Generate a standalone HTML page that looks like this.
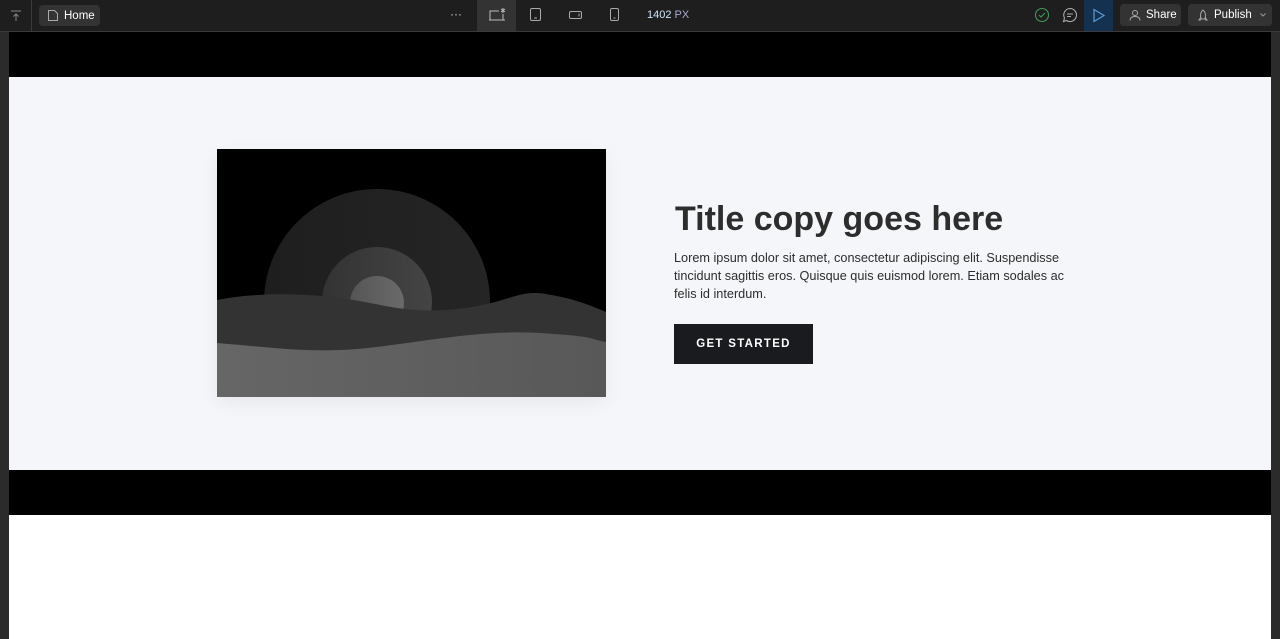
<!DOCTYPE html>
<html><head><style>
*{margin:0;padding:0;box-sizing:border-box}
body{width:1280px;height:639px;overflow:hidden;background:#2b2b2b;font-family:"Liberation Sans",sans-serif;position:relative}
.tb{position:absolute;left:0;top:0;width:1280px;height:32px;background:#1e1e1e;border-bottom:1px solid #3a3a3a}
.abs{position:absolute}
.btn{position:absolute;background:#333;border-radius:4px;color:#fff;font-size:11.5px;display:flex;align-items:center}
</style></head><body>
<div class="tb">
 <div class="abs" style="left:31px;top:0;width:1px;height:31px;background:#3a3a3a"></div>
 <svg class="abs" style="left:9px;top:9px" width="14" height="14" viewBox="0 0 14 14" fill="none" stroke="#888" stroke-width="1"><path d="M2 2h10M7 12V5M4.5 7.5L7 5l2.5 2.5"/></svg>
 <div class="btn" style="left:39px;top:5px;width:61px;height:21px;padding-left:8px"><svg width="12" height="13" viewBox="0 0 12 13" fill="none" stroke="#aaa"><path d="M1.5 1.5h6l3 3v7h-9z"/></svg><span style="margin-left:5px">Home</span></div>
 <div class="abs" style="left:450px;top:7px;color:#ccc;font-size:12px">···</div>
 <div class="abs" style="left:477px;top:0;width:39px;height:31px;background:#333"></div>
 <svg class="abs" style="left:486px;top:6px" width="22" height="16" viewBox="0 0 22 16" fill="none" stroke="#bbb" stroke-width="1"><path d="M3 14h16M4 14V5h9M17 8v6"/><path d="M17 2v5M15 3l4 3M19 3l-4 3" /></svg>
 <svg class="abs" style="left:529px;top:7px" width="13" height="16" viewBox="0 0 13 16" fill="none" stroke="#aaa"><rect x="1.5" y="1.5" width="10" height="12" rx="1.5"/><path d="M5 11h3"/></svg>
 <svg class="abs" style="left:568px;top:9px" width="16" height="12" viewBox="0 0 16 12" fill="none" stroke="#aaa"><rect x="1.5" y="2.5" width="12" height="7" rx="1.5"/><path d="M11 4.5v3"/></svg>
 <svg class="abs" style="left:609px;top:7px" width="12" height="16" viewBox="0 0 12 16" fill="none" stroke="#aaa"><rect x="1.5" y="1.5" width="8" height="12" rx="1.5"/><path d="M4.5 11h2"/></svg>
 <div class="abs" style="left:647px;top:9px;color:#cfe3ff;font-size:11px">1402 <span style="color:#aac">PX</span></div>
 <svg class="abs" style="left:1034px;top:7px" width="16" height="16" viewBox="0 0 16 16" fill="none" stroke="#3f9a55" stroke-width="1.1"><circle cx="8" cy="8" r="6.5"/><path d="M5 8l2 2 4-4"/></svg>
 <svg class="abs" style="left:1062px;top:7px" width="16" height="16" viewBox="0 0 16 16" fill="none" stroke="#aaa" stroke-width="1.1"><path d="M8 1.5a6.5 6.5 0 1 1-3.5 12L1.5 14.5 2.5 11A6.5 6.5 0 0 1 8 1.5z"/><path d="M5 7h6M5 9.5h4"/></svg>
 <div class="abs" style="left:1084px;top:0;width:29px;height:31px;background:#14324f"></div>
 <svg class="abs" style="left:1092px;top:8px" width="14" height="15" viewBox="0 0 14 15" fill="none" stroke="#5d9bd9" stroke-width="1.2"><path d="M2 1.5v12l10-6z"/></svg>
 <div class="btn" style="left:1120px;top:4px;width:61px;height:22px;padding-left:9px"><svg width="12" height="12" viewBox="0 0 12 12" fill="none" stroke="#aaa"><circle cx="6" cy="4" r="2.5"/><path d="M1 11.5c0-3 2-4 5-4s5 1 5 4"/></svg><span style="margin-left:5px">Share</span></div>
 <div class="btn" style="left:1188px;top:4px;width:84px;height:22px;padding-left:9px"><svg width="12" height="13" viewBox="0 0 12 13" fill="none" stroke="#aaa"><path d="M6 1c2.5 2 3 5 2 9H4C3 6 3.5 3 6 1zM4 8l-2 3h2M8 8l2 3H8"/></svg><span style="margin-left:5px">Publish</span><svg style="margin-left:7px" width="8" height="6" viewBox="0 0 8 6" fill="none" stroke="#999"><path d="M1.5 1.5L4 4l2.5-2.5"/></svg></div>
</div>
<div class="abs" style="left:9px;top:32px;width:1262px;height:45px;background:#000"></div>
<div class="abs" style="left:9px;top:77px;width:1262px;height:393px;background:#f5f6fa"></div>
<div class="abs" style="left:9px;top:470px;width:1262px;height:45px;background:#000"></div>
<div class="abs" style="left:9px;top:515px;width:1262px;height:124px;background:#fff"></div>
<svg class="abs" style="left:217px;top:149px;box-shadow:0 6px 18px rgba(0,0,0,0.06)" width="389" height="248" viewBox="0 0 389 248">
 <defs>
  <linearGradient id="g1" x1="0" x2="1"><stop offset="0" stop-color="#1e1e1e"/><stop offset="1" stop-color="#252525"/></linearGradient>
  <linearGradient id="g2" x1="0" x2="1"><stop offset="0" stop-color="#333"/><stop offset="1" stop-color="#444"/></linearGradient>
  <linearGradient id="g3" x1="0" x2="1"><stop offset="0" stop-color="#555"/><stop offset="1" stop-color="#6a6a6a"/></linearGradient>
  <linearGradient id="g4" x1="0" x2="1"><stop offset="0" stop-color="#666"/><stop offset="1" stop-color="#585858"/></linearGradient>
 </defs>
 <rect width="389" height="248" fill="#000"/>
 <circle cx="160" cy="153" r="113" fill="url(#g1)"/>
 <circle cx="160" cy="153" r="55" fill="url(#g2)"/>
 <circle cx="160" cy="154" r="27" fill="url(#g3)"/>
 <path d="M0 151C40 143 90 144 130 150S190 165 240 160S300 140 329 145S370 155 389 163V248H0z" fill="#333"/>
 <path d="M0 194C50 198 90 204 140 200S260 180 323 184S370 190 389 193V248H0z" fill="url(#g4)"/>
</svg>
<div class="abs" style="left:675px;top:200px;font-size:34px;font-weight:bold;color:#2d2d2d">Title copy goes here</div>
<div class="abs" style="left:674px;top:249px;width:398px;font-size:12.7px;line-height:18px;color:#2d2d2d">Lorem ipsum dolor sit amet, consectetur adipiscing elit. Suspendisse tincidunt sagittis eros. Quisque quis euismod lorem. Etiam sodales ac felis id interdum.</div>
<div class="abs" style="left:674px;top:324px;width:139px;height:40px;background:#1a1b1f;color:#fff;font-size:11.5px;font-weight:bold;letter-spacing:1.3px;display:flex;align-items:center;justify-content:center">GET STARTED</div>
</body></html>
